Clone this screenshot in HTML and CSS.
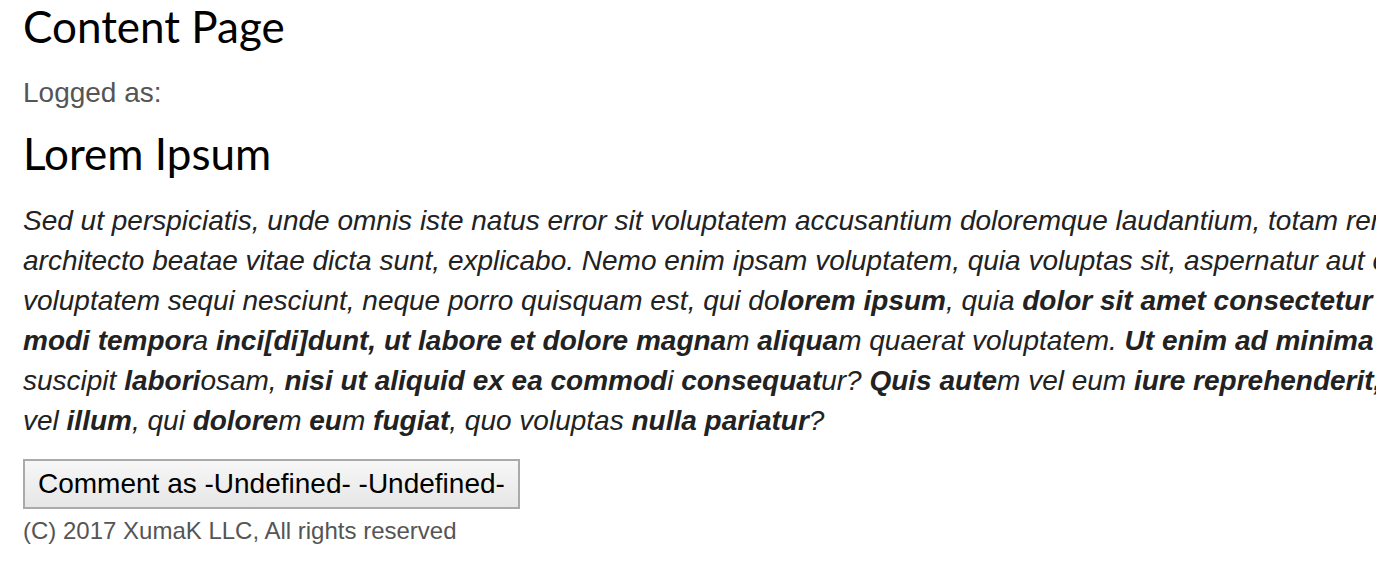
FILE: index.html
```html
<!DOCTYPE html>
<html lang="en">
<head>
<meta charset="utf-8">
<title>Content Page</title>
<link rel="stylesheet" href="styles.css">
</head>
<body>
<div class="page">
  <h1 class="title">Content Page</h1>
  <p class="logged">Logged as:</p>
  <h2 class="subtitle">Lorem Ipsum</h2>
  <p class="text">Sed ut perspiciatis, unde omnis iste natus error sit voluptatem accusantium doloremque laudantium, totam rem aperiam eaque ipsa, quae ab illo inventore veritatis et quasi<br>architecto beatae vitae dicta sunt, explicabo. Nemo enim ipsam voluptatem, quia voluptas sit, aspernatur aut odit aut fugit, sed quia consequuntur magni dolores eos, qui ratione<br>voluptatem sequi nesciunt, neque porro quisquam est, qui do<b>lorem ipsum</b>, quia <b>dolor sit amet consectetur adipisci[ng] velit, sed quia non numquam [do] eius<br>modi tempor</b>a <b>inci[di]dunt, ut labore et dolore magna</b>m <b>aliqua</b>m quaerat voluptatem. <b>Ut enim ad minima veniam, quis nostru</b>m <b>exercitation</b>em <b>ullam corporis</b><br>suscipit <b>labori</b>osam, <b>nisi ut aliquid ex ea commod</b>i <b>consequat</b>ur? <b>Quis aute</b>m vel eum <b>iure reprehenderit, qui in ea voluptate velit esse</b>, quam nihil <b>molestiae consequat</b>ur,<br>vel <b>illum</b>, qui <b>dolore</b>m <b>eu</b>m <b>fugiat</b>, quo voluptas <b>nulla pariatur</b>?</p>
  <button class="comment-btn" type="button">Comment as -Undefined- -Undefined-</button>
  <p class="footer">(C) 2017 XumaK LLC, All rights reserved</p>
</div>
</body>
</html>
```

FILE: styles.css
```css
html {
  overflow: hidden;
}
body {
  margin: 0;
  background: #fff;
  font-family: "Liberation Sans", Arial, Helvetica, sans-serif;
}
.page {
  padding: 0 23px;
  width: 2300px;
  display: flex;
  flex-direction: column;
  align-items: flex-start;
}
.title {
  font-family: Lato, "Noto Sans", sans-serif;
  font-weight: 400;
  font-size: 44px;
  line-height: 52px;
  margin: 0;
  color: #000;
}
.logged {
  font-size: 28px;
  line-height: 34px;
  margin: 24px 0 0;
  color: #555;
}
.subtitle {
  font-family: Lato, "Noto Sans", sans-serif;
  font-weight: 400;
  font-size: 44px;
  line-height: 54px;
  margin: 16px 0 0;
  color: #000;
}
.text {
  font-size: 28px;
  line-height: 40px;
  font-style: italic;
  color: #222;
  margin: 21px 0 0;
  white-space: nowrap;
}
.text b {
  font-weight: 700;
}
.comment-btn {
  margin-top: 18px;
  font-family: "Liberation Sans", Arial, sans-serif;
  font-size: 28px;
  color: #000;
  height: 50px;
  padding: 0 13px;
  border: 2px solid #aaa;
  background: linear-gradient(#f7f7f7, #e6e6e6);
}
.footer {
  font-size: 24px;
  line-height: 30px;
  color: #555;
  margin: 7px 0 0;
}
```
